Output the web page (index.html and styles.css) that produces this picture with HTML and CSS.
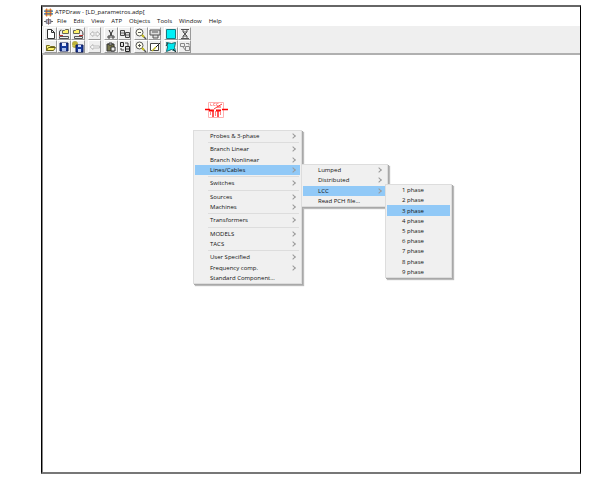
FILE: index.html
```
<!DOCTYPE html>
<html lang="en">
<head>
<meta charset="utf-8">
<title>ATPDraw</title>
<link rel="stylesheet" href="styles.css">
</head>
<body>
<svg class="defs" aria-hidden="true">
  <defs>
    <g id="page"><path d="M2.500 1.500h4l3 3v6h-7zM6.500 1.500v3h3" fill="#fff" stroke="#333"/></g>
    <g id="folder"><path d="M1.500 9.500v-5h3l1 1h4v1.500" fill="#f5ee7a" stroke="#776f20"/><path d="M1.500 9.500l2-3h7l-2 3z" fill="#fff36b" stroke="#666018"/></g>
    <g id="disk"><path d="M2 2h8v8h-8z" fill="#173b9c" stroke="#0b1858"/><path d="M4 2h4v3h-4z" fill="#e8edff"/><path d="M4 7h4v3h-4z" fill="#aabce8"/></g>
    <g id="lens"><circle cx="4.500" cy="4.500" r="3.500" fill="#fffff0" stroke="#555"/><path d="M7 7l4 4" stroke="#555" stroke-width="1.500"/><path d="M7 7l2 2" stroke="#c8c020" stroke-width="2"/><path d="M3 4.500h3" stroke="#555"/></g>
  </defs>
</svg>
<main class="window">
  <header class="title">
    <svg class="app-icon" viewBox="0 0 10 9"><path d="M1 1h8v7H1z" fill="#f3c24b"/><path d="M0 3h10M0 6h10" stroke="#326ab0" stroke-width="1.500"/><path d="M3 0v9M7 0v9" stroke="#c9472c"/></svg>
    <span>ATPDraw - [LD_parametros.adp[</span>
  </header>
  <nav class="menubar" aria-label="Main menu">
    <svg class="app-icon" viewBox="0 0 10 9"><path d="M0 4.500h10" stroke="#555"/><path d="M2.500 2.500h5v4h-5z" fill="#bbc" stroke="#667"/><path d="M5 1v7" stroke="#755"/></svg>
    <button>File</button><button>Edit</button><button>View</button><button>ATP</button><button>Objects</button><button>Tools</button><button>Window</button><button>Help</button>
  </nav>
  <div class="toolbar" role="toolbar" aria-label="Tools">
    <div class="group three">
      <button aria-label="New"><svg viewBox="0 0 12 12"><use href="#page"/></svg></button>
      <button aria-label="Open project"><svg viewBox="0 0 12 12"><path d="M4.500 5.500v-3h2l1-1h3v4z" fill="#fff36b" stroke="#665"/><path d="M1.500 8V4q0-2 2-2" stroke="#444"/><path d="M1.500 8.500h9v2h-9z" fill="#eee" stroke="#555"/><path d="M1 7.500h4" stroke="#b33"/></svg></button>
      <button aria-label="Save project"><svg viewBox="0 0 12 12"><path d="M1.500 5.500v-3h2l1-1h3v4z" fill="#fff36b" stroke="#665"/><path d="M8 2q3 0 3 5" stroke="#444"/><path d="M2.500 8.500h8v2h-8z" fill="#eee" stroke="#555"/><path d="M7 7.500h4" stroke="#b33"/></svg></button>
      <button aria-label="Open"><svg viewBox="0 0 12 12"><use href="#folder"/></svg></button>
      <button aria-label="Save"><svg viewBox="0 0 12 12"><use href="#disk"/></svg></button>
      <button aria-label="Save as"><svg viewBox="0 0 12 12"><path d="M1 1h4v5H1zM3 0v7M0 3h6" fill="#fff36b" stroke="#a79d28"/><path d="M4 4h7v7H4z" fill="#173b9c" stroke="#0b1858"/><path d="M6 4h3v2H6zM6 8h3v3H6z" fill="#cdd8fa"/></svg></button>
    </div>
    <div class="group one">
      <button aria-label="Undo"><svg viewBox="0 0 12 12"><path d="M1 6l3-2.500v1.500h4V3.500l3 2.500-3 2.500V7H4v1.500z" fill="#f8f8f8" stroke="#bbb"/></svg></button>
      <button aria-label="Redo"><svg viewBox="0 0 12 12"><path d="M1 6l3-2.500v1.500h6.500v2H4v1.500z" fill="#f8f8f8" stroke="#bbb"/></svg></button>
    </div>
    <div class="group two">
      <button aria-label="Cut"><svg viewBox="0 0 12 12"><path d="M4 2l3 6M8 2L5 8" stroke="#222"/><path d="M3 8h2v2H3zM7 8h2v2H7z" fill="none" stroke="#444"/></svg></button>
      <button aria-label="Copy"><svg viewBox="0 0 12 12"><path d="M1.500 2.500h4v5h-4zM6.500 4.500h4v5h-4z" fill="#ddd" stroke="#444"/><path d="M2 5h3M7 7h3" stroke="#666"/></svg></button>
      <button aria-label="Paste"><svg viewBox="0 0 12 12"><path d="M2 3h7v7H2z" fill="#77764b" stroke="#333"/><path d="M4 2h3v2H4z" fill="#ddd" stroke="#333"/><path d="M6 6h4v4H6z" fill="#eee" stroke="#333"/></svg></button>
      <button aria-label="Duplicate"><svg viewBox="0 0 12 12"><path d="M1.500 1.500h3v4h-3zM6.500 5.500h4v5h-4z" fill="#ddd" stroke="#222"/><path d="M6 2h3v3M2 7v2h3M7 8h3" fill="none" stroke="#444"/></svg></button>
    </div>
    <div class="group two">
      <button aria-label="Zoom out"><svg viewBox="0 0 12 12"><use href="#lens"/></svg></button>
      <button aria-label="Text"><svg viewBox="0 0 12 12"><path d="M1 2h10v5H1zM4 7v3h5V7M3 4h6" fill="#ddd" stroke="#555"/></svg></button>
      <button aria-label="Zoom in"><svg viewBox="0 0 12 12"><use href="#lens"/><path d="M4.500 3v3" stroke="#555"/></svg></button>
      <button aria-label="Edit drawing"><svg viewBox="0 0 12 12"><path d="M1.500 2.500h8v7h-8z" fill="#fff" stroke="#444"/><path d="M5 8l6-6" stroke="#222"/><path d="M3 10l4-4" stroke="#bdb52a" stroke-width="1.500"/></svg></button>
    </div>
    <div class="group two">
      <button aria-label="Select all"><svg viewBox="0 0 12 12"><path d="M1.500 1.500h9v9h-9z" fill="#00f0f8" stroke="#167b82"/></svg></button>
      <button aria-label="Rotate"><svg viewBox="0 0 12 12"><path d="M2 1.500h8M2 10.500h8M4 2v2h4V2M4 10V8h4v2M4 4l4 4M8 4L4 8" fill="none" stroke="#555"/></svg></button>
      <button aria-label="Select area"><svg viewBox="0 0 12 12"><path d="M1.500 1.500l5 1 4-1-1 5 1 4-4-2-5 2 1-4.500z" fill="#00e8f0" stroke="#176a70"/><path d="M1 5l2-3M8 8l3 3" stroke="#333"/></svg></button>
      <button aria-label="Rubber band"><svg viewBox="0 0 12 12"><path d="M1.500 2.500h4v3h-4zM6.500 5.500h4v4h-4zM4 6l3 4M7 2.500h3v2" fill="#eee" stroke="#888"/></svg></button>
    </div>
  </div>
  <section class="canvas">
    <svg class="component" viewBox="0 0 24 18" role="img" aria-label="LCC component"><path d="M4.500 1.500h15v15h-15z" fill="#fff" stroke="#ffb0b0"/><path d="M1 8.500h5M18 8.500h6" stroke="#f00" stroke-width="1.500"/><path d="M5 9.500h5M12 9.500h5" stroke="#f00" stroke-width="2"/><path d="M9 9v7M14 9v7" stroke="#f22" stroke-width="1.500"/><path d="M6.500 10v4M11.500 10v5M16.500 10v4" stroke="#ff8080"/><path d="M10 8l3-2h4M13 6l5-3" stroke="#f33" fill="none"/><path d="M6.500 2.500v2h2M11.500 2.500h-2v2h2M14.500 2.500h-2v2h2" fill="none" stroke="#ff9a9a"/></svg>
    <ul class="menu main-menu">
      <li><button class="more">Probes &amp; 3-phase</button></li>
      <li class="separator"></li>
      <li><button class="more">Branch Linear</button></li>
      <li><button class="more">Branch Nonlinear</button></li>
      <li><button class="more active">Lines/Cables</button></li>
      <li class="separator"></li>
      <li><button class="more">Switches</button></li>
      <li class="separator"></li>
      <li><button class="more">Sources</button></li>
      <li><button class="more">Machines</button></li>
      <li class="separator"></li>
      <li><button class="more">Transformers</button></li>
      <li class="separator"></li>
      <li><button class="more">MODELS</button></li>
      <li><button class="more">TACS</button></li>
      <li class="separator"></li>
      <li><button class="more">User Specified</button></li>
      <li><button class="more">Frequency comp.</button></li>
      <li><button>Standard Component...</button></li>
    </ul>
    <ul class="menu line-menu">
      <li><button class="more">Lumped</button></li>
      <li><button class="more">Distributed</button></li>
      <li><button class="more active">LCC</button></li>
      <li><button>Read PCH file...</button></li>
    </ul>
    <ul class="menu phase-menu">
      <li><button>1 phase</button></li>
      <li><button>2 phase</button></li>
      <li><button class="active">3 phase</button></li>
      <li><button>4 phase</button></li>
      <li><button>5 phase</button></li>
      <li><button>6 phase</button></li>
      <li><button>7 phase</button></li>
      <li><button>8 phase</button></li>
      <li><button>9 phase</button></li>
    </ul>
  </section>
</main>
</body>
</html>
```
FILE: styles.css
```
* { box-sizing: border-box; }
body {
  margin: 0;
  min-height: 100vh;
  padding: 5px 35px 4px 41px;
  display: flex;
  background: #fff;
  color: #111;
  font: 6px/10px "Open Sans", "Noto Sans", sans-serif;
}
button {
  margin: 0;
  padding: 0;
  border: 0;
  background: none;
  color: inherit;
  font: inherit;
}
.defs { position: absolute; width: 0; height: 0; }
.window {
  flex: 1;
  display: flex;
  flex-direction: column;
  border: 2px solid #777;
  border-top-color: #666;
  border-left: 1px solid #000;
  border-right: 1px solid #000;
  box-shadow: inset 1px 0 #888;
}
.title, .menubar {
  display: flex;
  align-items: center;
  padding-left: 2px;
}
.title { height: 10px; gap: 2px; }
.menubar { height: 9px; gap: 7px; line-height: 9px; }
.menubar .app-icon { margin-right: -3px; }
.app-icon { width: 9px; height: 9px; }
.toolbar {
  display: flex;
  gap: 3px;
  padding: 1px 2px 0;
  height: 29px;
  background: #efefef;
  border-bottom: 2px solid #b0b0b0;
}
.group {
  display: grid;
  grid-auto-rows: 13px;
}
.one { grid-template-columns: 13px; }
.two { grid-template-columns: 14px 13px; }
.three { grid-template-columns: 13px 14px 14px; }
.group button {
  border: 1px solid #fff;
  border-right-color: #999;
  border-bottom-color: #999;
  background: #efefef;
  display: flex;
  align-items: center;
  justify-content: center;
}
.group svg { flex: none; width: 12px; height: 12px; fill: none; }
.canvas { position: relative; flex: 1; }
.component { position: absolute; left: 162px; top: 46px; width: 24px; height: 18px; }
.menu {
  position: absolute;
  display: flex;
  flex-direction: column;
  margin: 0;
  padding: 0;
  list-style: none;
  background: #f0f0f0;
  border: 1px solid #ddd;
  box-shadow: 1px 1px #a8a8a8, 2px 2px 1px #bbb;
}
.menu li { flex: 1; display: flex; min-height: 0; }
.menu .separator {
  flex: none;
  height: 3px;
  margin: 0 2px 0 14px;
  align-items: center;
}
.separator::before { content: ""; flex: 1; height: 1px; background: #ddd; }
.menu button {
  flex: 1;
  display: flex;
  align-items: center;
  justify-content: space-between;
  margin: 0 1px;
  padding: 0 5px 0 15px;
  text-align: left;
  white-space: nowrap;
}
.menu .active { background: #91c9f7; }
.more::after {
  content: "";
  width: 3px;
  height: 3px;
  border: solid #999;
  border-width: 1px 1px 0 0;
  transform: rotate(45deg);
}
.main-menu { left: 151px; top: 75px; width: 109px; height: 154px; }
.line-menu { left: 259px; top: 109px; width: 87px; height: 43px; }
.phase-menu { left: 343px; top: 129px; width: 67px; height: 94px; }
```
